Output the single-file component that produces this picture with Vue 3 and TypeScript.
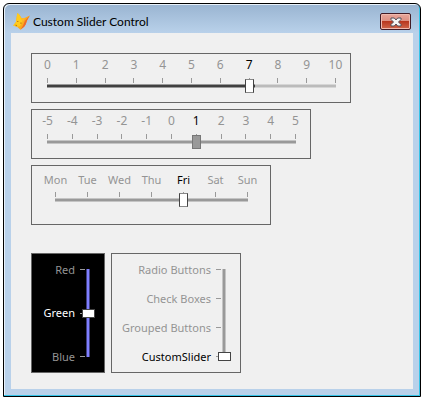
<script setup lang="ts">
import { reactive } from 'vue'

interface Slider {
  id: string
  name: string
  kind: string
  labels: string[]
  value: number
}

const horizontal = reactive<Slider[]>([
  { id: 'level', name: 'Level', kind: 'level', labels: ['0', '1', '2', '3', '4', '5', '6', '7', '8', '9', '10'], value: 7 },
  { id: 'offset', name: 'Offset', kind: 'offset', labels: ['-5', '-4', '-3', '-2', '-1', '0', '1', '2', '3', '4', '5'], value: 6 },
  { id: 'day', name: 'Day', kind: 'day', labels: ['Mon', 'Tue', 'Wed', 'Thu', 'Fri', 'Sat', 'Sun'], value: 4 },
])

const vertical = reactive<Slider[]>([
  { id: 'colour', name: 'Colour', kind: 'colour', labels: ['Red', 'Green', 'Blue'], value: 1 },
  { id: 'control', name: 'Control', kind: 'control', labels: ['Radio Buttons', 'Check Boxes', 'Grouped Buttons', 'CustomSlider'], value: 3 },
])

const percent = (s: Slider) => (s.value / (s.labels.length - 1)) * 100 + '%'
</script>

<template>
  <main class="window">
    <header class="titlebar">
      <svg class="logo" viewBox="0 0 16 16" aria-hidden="true">
        <path d="M4 0.3 L5.5 1 L8.2 5 L11 4.6 L15.8 2.4 L13.2 7 L12 10.5 L10.5 13 L7 15.8 L3.8 13 L0.2 11.8 L2.8 8.5 Z" fill="#fbaa1c" />
        <path d="M4 0.3 L5.5 1 L8 5 L8.8 9 L6.5 12.5 L3.8 13 L0.2 11.8 L2.8 8.5 Z" fill="#ffcb1c" />
        <path d="M15.8 2.4 L13.2 7 L12 10.5 L10.5 13 L7 15.8 L9.6 11.5 L11.2 7.5 Z" fill="#ee6a2c" />
        <path d="M8 5 L11.5 4.4 L9.2 9 Z" fill="#ffb62b" />
        <path d="M4 7.5 h1 v1 h-1z M7 9 h1 v1 h-1z M2 11 l2 .4 -1 1z" fill="#b5650f" />
      </svg>
      <h1>Custom Slider Control</h1>
      <button class="close" type="button" aria-label="Close">
        <svg viewBox="0 0 12 10" aria-hidden="true">
          <path d="M1 1 H4.3 L6 3 L7.7 1 H11 V2.5 L8.5 5 L11 7.5 V9 H7.7 L6 7 L4.3 9 H1 V7.5 L3.5 5 L1 2.5 Z" fill="#f4f4f4" stroke="#53505a" stroke-width="1" />
        </svg>
      </button>
    </header>

    <section class="content">
      <div class="stack">
        <div v-for="s in horizontal" :key="s.id" class="panel across" :class="s.kind">
          <ol class="scale">
            <li v-for="(text, i) in s.labels" :key="text" :class="{ active: i === s.value }">
              <span class="text">{{ text }}</span><i class="tick"></i>
            </li>
          </ol>
          <div class="groove">
            <span class="rail"></span>
            <span class="fill" :style="{ width: percent(s) }"></span>
            <input v-model.number="s.value" type="range" min="0" :max="s.labels.length - 1" :aria-label="s.name" />
          </div>
        </div>
      </div>

      <div class="row">
        <div v-for="s in vertical" :key="s.id" class="panel down" :class="s.kind">
          <ol class="scale">
            <li v-for="(text, i) in s.labels" :key="text" :class="{ active: i === s.value }">
              <span class="text">{{ text }}</span><i class="tick"></i>
            </li>
          </ol>
          <div class="groove">
            <span class="rail"></span>
            <input v-model.number="s.value" type="range" min="0" :max="s.labels.length - 1" :aria-label="s.name" />
          </div>
        </div>
      </div>
    </section>
  </main>
</template>

<style>
body {
  background: #fff;
}
</style>

<style scoped>
* {
  box-sizing: border-box;
}

.window {
  margin: 3px 4px 9px 3px;
  padding: 0 7px 7px;
  border: 1px solid #000;
  border-radius: 6px 6px 0 0;
  background: linear-gradient(#99b4d1, #b9d1ea 29px);
  box-shadow: inset -1px -1px #35c4e8, inset 1px 1px #e8f1fa;
  font: 11px/16px "Noto Sans", "Open Sans", sans-serif;
  color: #000;
}

.titlebar {
  display: flex;
  align-items: center;
  height: 29px;
  padding: 6px 2px 0;
}

.logo {
  width: 17px;
  height: 17px;
}

h1 {
  margin: 0 auto 0 3px;
  font: 12px/16px Lato, "Open Sans", sans-serif;
}

.close {
  display: grid;
  place-items: center;
  width: 31px;
  height: 17px;
  padding: 0;
  border: 1px solid #421b25;
  border-radius: 2px;
  background: linear-gradient(#e8a79c, #dc8e80 50%, #b8371f 50%, #d0674c);
  box-shadow: inset 0 0 0 1px #efb9ae;
}

.close svg {
  width: 12px;
  height: 10px;
}

.content {
  padding: 20px 20px 16px;
  background: #f0f0f0;
}

.stack {
  display: grid;
  gap: 6px;
}

.row {
  display: flex;
  gap: 6px;
  margin-top: 28px;
}

.panel {
  border: 1px solid #666;
}

.level {
  width: min(100%, 320px);
}

.offset {
  width: min(100%, 280px);
}

.level,
.offset {
  font-size: 12px;
}

.day {
  width: min(100%, 240px);
}

.across {
  height: 50px;
  padding: 3px 14px 0 15px;
}

.across.day {
  height: 60px;
  padding: 6px 22px 0 23px;
}

.scale {
  display: flex;
  justify-content: space-between;
  margin: 0;
  padding: 0;
  list-style: none;
  color: #949494;
}

.scale li {
  display: flex;
  align-items: center;
  white-space: nowrap;
}

.scale .active {
  color: #000;
}

.tick {
  flex: none;
  background: #999;
}

.across li {
  flex-direction: column;
  gap: 5px;
  width: 1px;
}

.across.day li {
  gap: 4px;
}

.across .tick {
  width: 1px;
  height: 5px;
}

.groove {
  display: grid;
}

.groove > * {
  grid-area: 1 / 1;
}

.rail {
  background: #999;
  border: 0 solid #c4c4c4;
}

.across .groove {
  height: 14px;
  margin: -4px -4px 0;
  align-items: center;
}

.across .rail,
.across .fill {
  height: 4px;
  border-width: 1px 0;
}

.across .rail {
  margin: 0 4px;
}

.fill {
  display: none;
}

.level .rail {
  background: #bbb;
  border-color: #d6d6d6;
}

.level .fill {
  display: block;
  margin-left: 4px;
  background: #404040;
  border: solid #999;
  border-width: 1px 0;
}

input {
  appearance: none;
  margin: 0;
  background: transparent;
}

.across input {
  width: 100%;
  height: 14px;
}

input::-webkit-slider-thumb {
  appearance: none;
  box-sizing: border-box;
  width: 9px;
  height: 14px;
  border: 1px solid #444;
  border-top-color: #888;
  border-bottom-color: #888;
  background: #fff;
}

.offset input::-webkit-slider-thumb {
  border-color: #777;
  background: #999;
}

.down {
  display: flex;
  justify-content: flex-end;
  gap: 1px;
  height: 120px;
  padding: 15px 14px;
}

.colour {
  width: 74px;
  background: #000;
}

.colour .scale .active {
  color: #fff;
}

.control {
  width: 130px;
}

.down .scale {
  flex-direction: column;
  align-items: flex-end;
}

.down li {
  gap: 5px;
  height: 1px;
}

.down .tick {
  width: 5px;
  height: 1px;
}

.down .groove {
  width: 4px;
  justify-items: center;
}

.down .rail {
  width: 4px;
  border-width: 0 1px;
}

.colour .rail {
  background: #7f7fff;
  border-color: #40407f;
}

.down input {
  width: 13px;
  height: calc(100% + 8px);
  margin: -4px -5px -4px -4px;
  writing-mode: vertical-lr;
}

.down input::-webkit-slider-thumb {
  width: 13px;
  height: 9px;
  border-color: #444;
}
</style>
